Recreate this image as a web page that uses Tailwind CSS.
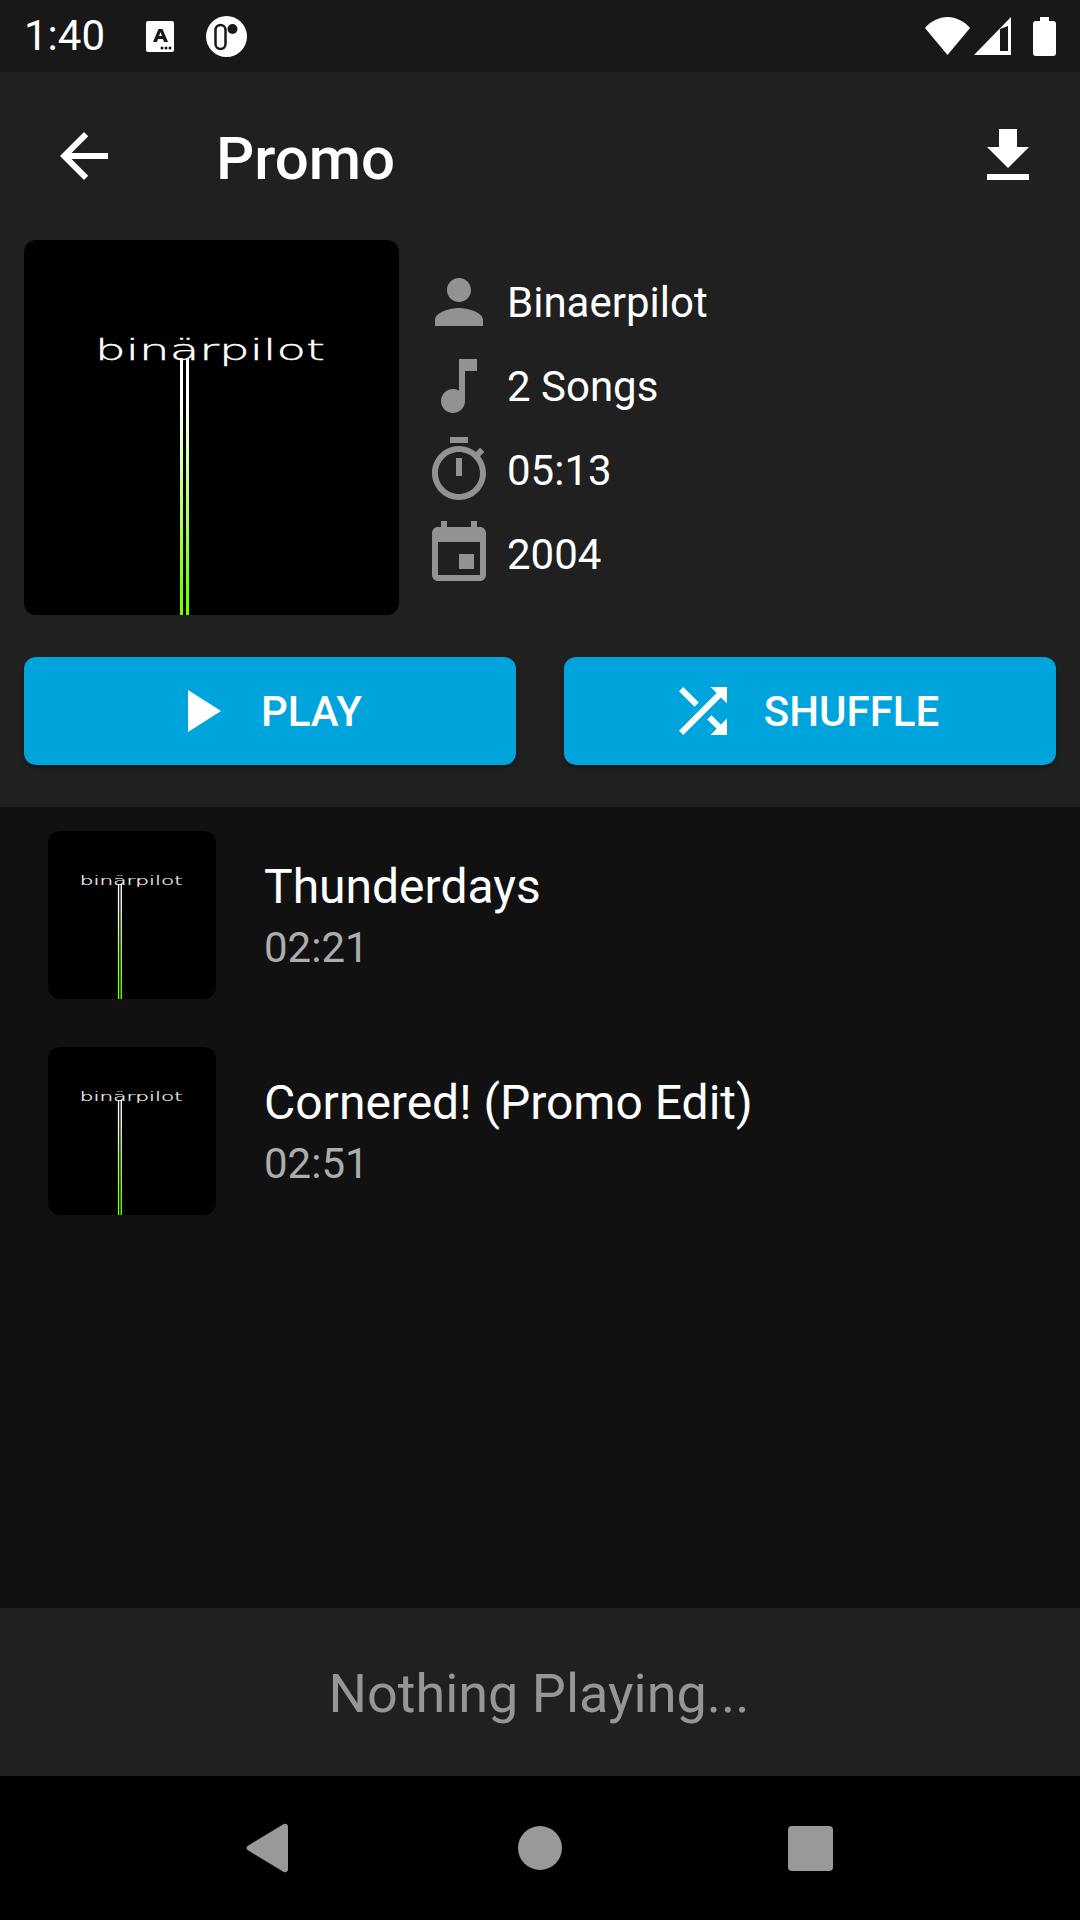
<!DOCTYPE html>
<html lang="en">
<head>
    <meta charset="UTF-8">
    <meta name="viewport" content="width=device-width, initial-scale=1.0">
    <title>Promo</title>
    <script src="https://cdn.jsdelivr.net/npm/@tailwindcss/browser@4"></script>
</head>
<body class="w-[1080px] h-[1920px] flex flex-col overflow-hidden bg-[#111111] text-white font-[Roboto,sans-serif]">

    <!-- status bar -->
    <div class="h-[72px] shrink-0 bg-[#181818] flex items-center pl-[24px] pr-[24px]">
        <span class="text-[42px] leading-none w-[122px]">1:40</span>
        <svg class="w-[28px] h-[31px]" viewBox="0 0 28 31">
            <rect width="28" height="31" rx="2" fill="#fff"/>
            <path fill-rule="evenodd" d="M7 21L12.500 8h4L22 21h-4l-1-3h-5l-1 3zM13 15h3l-1.500-4z" fill="#181818"/>
            <circle cx="16" cy="27" r="1.500" fill="#181818"/><circle cx="20" cy="27" r="1.500" fill="#181818"/><circle cx="24" cy="27" r="1.500" fill="#181818"/>
        </svg>
        <svg class="w-[41px] h-[41px] ml-[32px]" viewBox="0 0 41 41">
            <circle cx="20.500" cy="20.500" r="20.500" fill="#fff"/>
            <rect x="9.500" y="9" width="10" height="24" rx="5" fill="#fff" stroke="#181818" stroke-width="2.500"/>
            <circle cx="26.500" cy="13" r="5" fill="#181818"/>
        </svg>
        <div class="ml-auto flex items-center">
            <svg class="w-[45px] h-[38px]" viewBox="0 0 45 38"><path d="M0 11C6 4 14 0 22.500 0S39 4 45 11L22.500 38z" fill="#fff"/></svg>
            <svg class="w-[37px] h-[38px] ml-[4px]" viewBox="0 0 37 38"><path fill-rule="evenodd" d="M37 0v38H0zM26 12v22h8V9z" fill="#fff"/></svg>
            <svg class="w-[23px] h-[39px] ml-[22px]" viewBox="0 0 23 39"><path d="M7 0h9v4h4a3 3 0 0 1 3 3v29a3 3 0 0 1-3 3H3a3 3 0 0 1-3-3V7a3 3 0 0 1 3-3h4z" fill="#fff"/></svg>
        </div>
    </div>

    <!-- album header -->
    <div class="shrink-0 bg-[#202020] pb-[42px]">
        <div class="h-[168px] flex items-center pl-[48px] pr-[36px]">
            <svg class="w-[72px] h-[72px]" viewBox="0 0 24 24" fill="#fff"><path d="M20 11H7.830l5.590-5.590L12 4l-8 8 8 8 1.410-1.410L7.830 13H20v-2z"/></svg>
            <h1 class="ml-[96px] pt-[5px] text-[60px] font-medium leading-none">Promo</h1>
            <svg class="w-[72px] h-[72px] ml-auto" viewBox="0 0 24 24" fill="#fff"><path d="M19 9h-4V3H9v6H5l7 7 7-7zM5 18v2h14v-2H5z"/></svg>
        </div>

        <div class="flex items-center px-[24px]">
            <!-- cover art, the list rows reuse this symbol -->
            <svg class="w-[375px] h-[375px] rounded-[12px] shrink-0">
                <defs>
                    <linearGradient id="line" x1="0" y1="105" x2="0" y2="375" gradientUnits="userSpaceOnUse">
                        <stop offset="0.2" stop-color="#ffffff"/>
                        <stop offset="0.9" stop-color="#76ff03"/>
                    </linearGradient>
                    <symbol id="cover" viewBox="0 0 375 375">
                        <rect width="375" height="375" fill="#000"/>
                        <text x="71" y="119.500" font-family="DejaVu Sans" font-weight="200" font-size="29" fill="#fff" stroke="#fff" stroke-width="0.400" textLength="230" lengthAdjust="spacingAndGlyphs">binärpilot</text>
                        <rect x="156" y="118" width="3" height="257" fill="url(#line)"/>
                        <rect x="162" y="118" width="3" height="257" fill="url(#line)"/>
                    </symbol>
                </defs>
                <use href="#cover"/>
            </svg>
            <div class="ml-[24px] flex flex-col gap-[12px] text-[42px] leading-none">
                <div class="flex items-center gap-[12px] h-[72px]">
                    <svg class="w-[72px] h-[72px]" viewBox="0 0 24 24" fill="#929292"><path d="M12 12c2.210 0 4-1.790 4-4s-1.790-4-4-4-4 1.790-4 4 1.790 4 4 4zm0 2c-2.670 0-8 1.340-8 4v2h16v-2c0-2.660-5.330-4-8-4z"/></svg>
                    <span class="pt-[2px]">Binaerpilot</span>
                </div>
                <div class="flex items-center gap-[12px] h-[72px]">
                    <svg class="w-[72px] h-[72px]" viewBox="0 0 24 24" fill="#929292"><path d="M12 3v10.550c-.590-.340-1.270-.550-2-.550-2.210 0-4 1.790-4 4s1.790 4 4 4 4-1.790 4-4V7h4V3h-6z"/></svg>
                    <span class="pt-[2px]">2 Songs</span>
                </div>
                <div class="flex items-center gap-[12px] h-[72px]">
                    <svg class="w-[72px] h-[72px]" viewBox="0 0 24 24" fill="#929292"><path d="M15 1H9v2h6V1zm-4 13h2V8h-2v6zm8.030-6.610l1.420-1.420c-.430-.510-.900-.990-1.410-1.410l-1.420 1.420C16.070 4.740 14.120 4 12 4c-4.970 0-9 4.030-9 9s4.020 9 9 9 9-4.030 9-9c0-2.120-.740-4.070-1.970-5.610zM12 20c-3.870 0-7-3.130-7-7s3.130-7 7-7 7 3.130 7 7-3.130 7-7 7z"/></svg>
                    <span class="pt-[2px]">05:13</span>
                </div>
                <div class="flex items-center gap-[12px] h-[72px]">
                    <svg class="w-[72px] h-[72px]" viewBox="0 0 24 24" fill="#929292"><path d="M17 12h-5v5h5v-5zM16 1v2H8V1H6v2H5c-1.110 0-1.990.900-1.990 2L3 19c0 1.100.890 2 2 2h14c1.100 0 2-.900 2-2V5c0-1.100-.900-2-2-2h-1V1h-2zm3 18H5V8h14v11z"/></svg>
                    <span class="pt-[2px]">2004</span>
                </div>
            </div>
        </div>

        <div class="mt-[42px] px-[24px] flex gap-[48px]">
            <button class="flex-1 h-[108px] rounded-[12px] bg-[#00a4dc] shadow-[0_3px_4px_rgba(0,0,0,0.3)] flex items-center justify-center gap-[25px] pr-[14px] text-[42px] font-medium leading-none">
                <svg class="w-[72px] h-[72px]" viewBox="0 0 24 24" fill="#fff"><path d="M8 5v14l11-7z"/></svg>
                <span class="pt-[2px]">PLAY</span>
            </button>
            <button class="flex-1 h-[108px] rounded-[12px] bg-[#00a4dc] shadow-[0_3px_4px_rgba(0,0,0,0.3)] flex items-center justify-center gap-[25px] pr-[14px] text-[42px] font-medium leading-none">
                <svg class="w-[72px] h-[72px]" viewBox="0 0 24 24" fill="#fff"><path d="M10.590 9.170L5.410 4 4 5.410l5.170 5.170 1.420-1.410zM14.500 4l2.040 2.040L4 18.590 5.410 20 17.960 7.460 20 9.500V4h-5.500zm.330 9.410l-1.410 1.410 3.130 3.130L14.500 20H20v-5.500l-2.040 2.040-3.130-3.130z"/></svg>
                <span class="pt-[2px]">SHUFFLE</span>
            </button>
        </div>
    </div>

    <!-- songs -->
    <div class="flex-1 flex flex-col gap-[48px] pt-[24px] pl-[48px]">
        <div class="flex items-center gap-[48px]">
            <svg class="w-[168px] h-[168px] rounded-[12px] shrink-0"><use href="#cover"/></svg>
            <div class="flex flex-col pt-[6px]">
                <span class="text-[48px] leading-[60px]">Thunderdays</span>
                <span class="text-[42px] leading-[62px] text-[#adadad]">02:21</span>
            </div>
        </div>
        <div class="flex items-center gap-[48px]">
            <svg class="w-[168px] h-[168px] rounded-[12px] shrink-0"><use href="#cover"/></svg>
            <div class="flex flex-col pt-[6px]">
                <span class="text-[48px] leading-[60px]">Cornered! (Promo Edit)</span>
                <span class="text-[42px] leading-[62px] text-[#adadad]">02:51</span>
            </div>
        </div>
    </div>

    <!-- now playing bar -->
    <div class="h-[168px] shrink-0 bg-[#202020] flex items-center justify-center pt-[2px] pr-[2px] text-[54px] text-[#969696]">Nothing Playing...</div>

    <!-- navigation bar -->
    <div class="h-[144px] shrink-0 bg-black flex items-center justify-center pr-[3px]">
        <svg class="w-[44px] h-[50px]" viewBox="0 0 44 50"><path d="M38 1.500a3 3 0 0 1 5 2.500v42a3 3 0 0 1-5 2.500L2.500 27a2.600 2.600 0 0 1 0-4z" fill="#999"/></svg>
        <div class="w-[44px] h-[44px] rounded-full bg-[#999] ml-[229px]"></div>
        <div class="w-[45px] h-[45px] rounded-[4px] bg-[#999] ml-[226px]"></div>
    </div>
</body>
</html>
